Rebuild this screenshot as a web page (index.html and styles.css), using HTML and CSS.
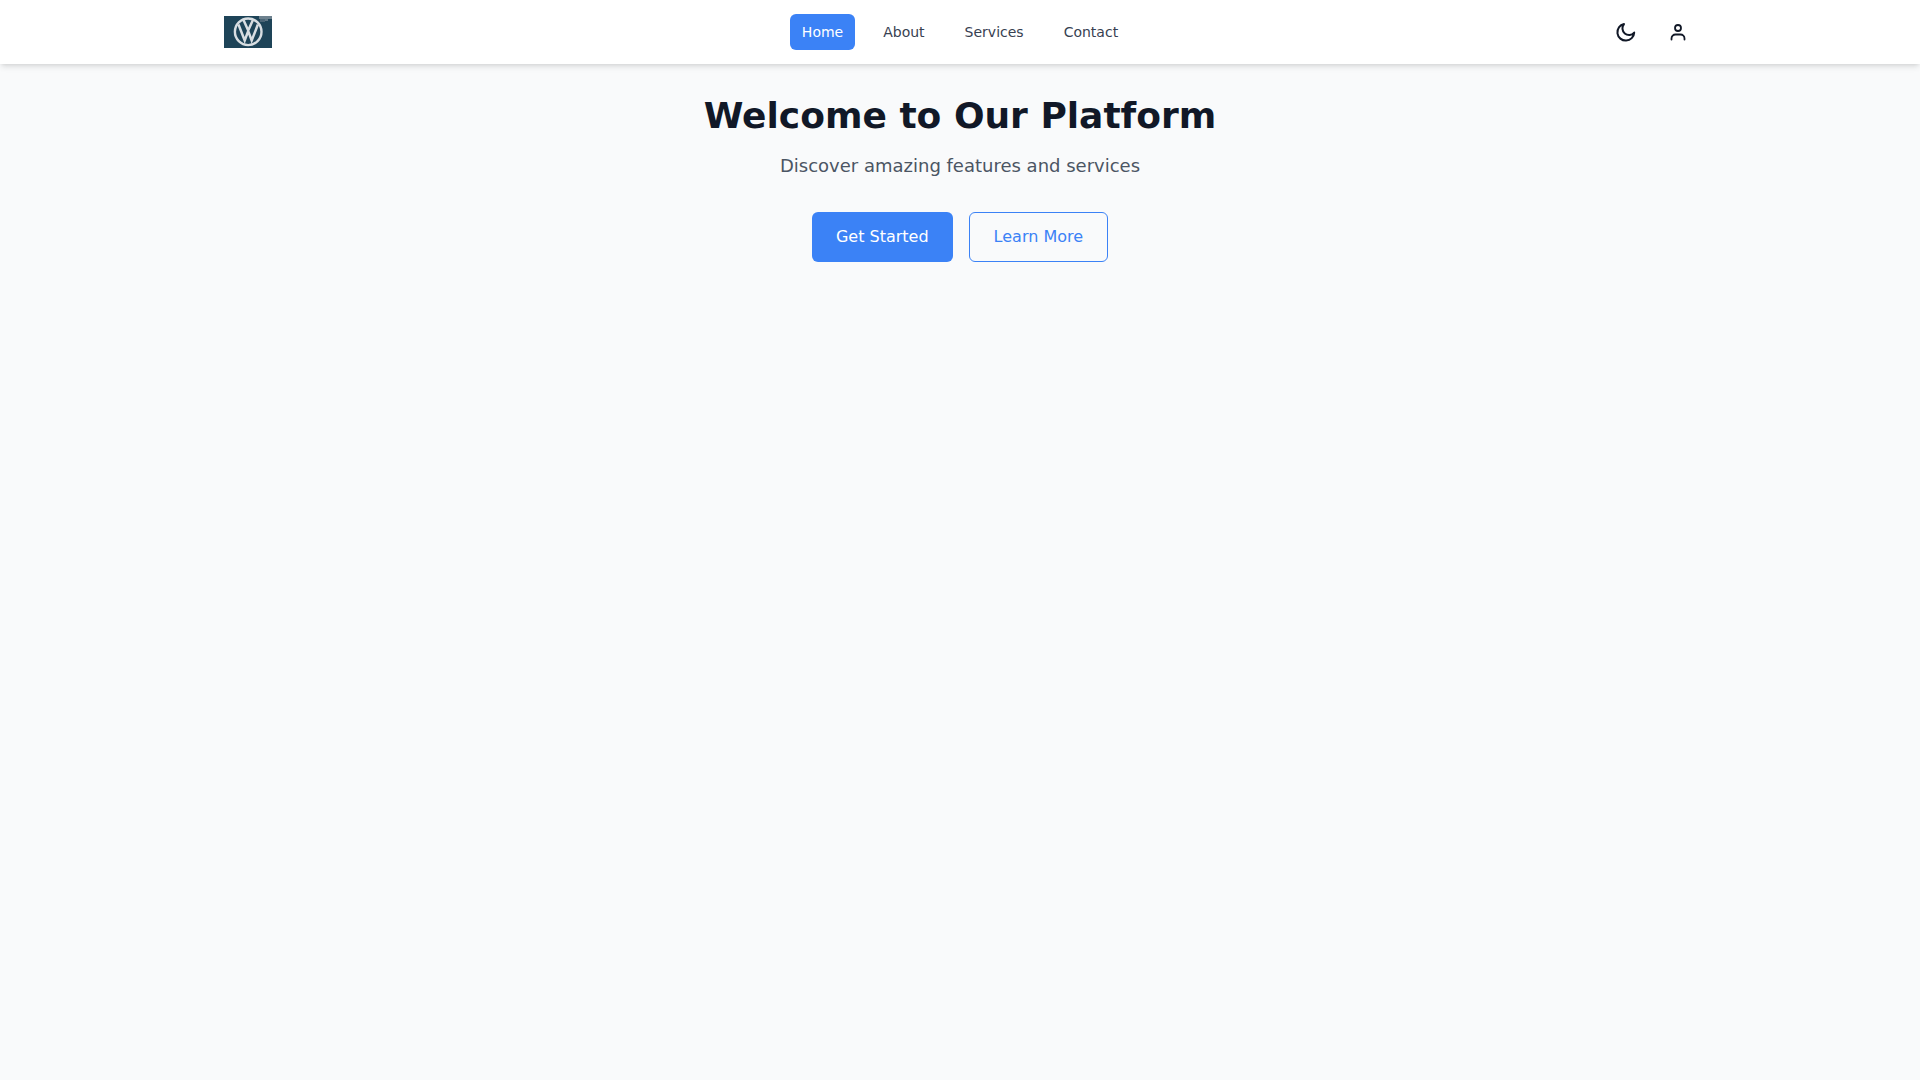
FILE: index.html
```html
<!DOCTYPE html>
<html lang="en">
<head>
    <meta charset="UTF-8">
    <meta name="viewport" content="width=device-width, initial-scale=1.0">
    <title>Welcome to Our Platform</title>
    <link rel="stylesheet" href="styles.css">
</head>
<body>
    <nav class="navbar">
        <div class="navbar-inner">
            <a class="logo" href="#">
                <svg width="48" height="32" viewBox="0 0 48 32">
                    <rect width="48" height="32" fill="#1e4458"/>
                    <rect x="35" y="0" width="13" height="3" fill="#6d818e"/>
                    <rect x="36" y="3" width="5" height="3" fill="#4a6576"/>
                    <rect x="41" y="3" width="3" height="2" fill="#5f7685"/>
                    <circle cx="24.2" cy="15.8" r="13.3" fill="none" stroke="#d8dee2" stroke-width="2.4"/>
                    <path d="M14.5 8.5 L20.7 24.5 L24.2 15 L27.7 24.5 L33.9 8.5 M19.5 4 L24.2 14.5 L28.9 4" fill="none" stroke="#d8dee2" stroke-width="2.5"/>
                </svg>
            </a>
            <div class="nav-links">
                <a class="nav-link active" href="#">Home</a>
                <a class="nav-link" href="#">About</a>
                <a class="nav-link" href="#">Services</a>
                <a class="nav-link" href="#">Contact</a>
            </div>
            <div class="nav-actions">
                <button class="icon-btn" aria-label="Toggle theme">
                    <svg width="24" height="24" viewBox="0 0 24 24" fill="none" stroke="#111827" stroke-width="2" stroke-linecap="round" stroke-linejoin="round">
                        <path d="M10 4A8.4 8.4 0 1 0 20.2 12.6 6.6 6.6 0 0 1 10 4z"/>
                    </svg>
                </button>
                <button class="icon-btn" aria-label="Account">
                    <svg width="24" height="24" viewBox="0 0 24 24" fill="none" stroke="#111827" stroke-width="1.8" stroke-linecap="round" stroke-linejoin="round">
                        <circle cx="12" cy="8" r="3"/>
                        <path d="M5.5 19.5v-1a4 4 0 0 1 4-4h5a4 4 0 0 1 4 4v1"/>
                    </svg>
                </button>
            </div>
        </div>
    </nav>

    <main class="hero">
        <h1>Welcome to Our Platform</h1>
        <p>Discover amazing features and services</p>
        <div class="hero-buttons">
            <a class="btn btn-primary" href="#">Get Started</a>
            <a class="btn btn-outline" href="#">Learn More</a>
        </div>
    </main>
</body>
</html>
```

FILE: styles.css
```css
body {
    font-family: "DejaVu Sans", sans-serif;
    margin: 0;
    background-color: #f9fafb;
    color: #111827;
}

a {
    text-decoration: none;
}

.navbar {
    background-color: #fff;
    box-shadow: 0 4px 6px -1px rgba(0, 0, 0, 0.1), 0 2px 4px -2px rgba(0, 0, 0, 0.1);
}

.navbar-inner {
    max-width: 1472px;
    height: 64px;
    margin: 0 auto;
    display: grid;
    grid-template-columns: 1fr auto 1fr;
    align-items: center;
}

.logo {
    display: flex;
}

.nav-links {
    display: flex;
    gap: 16px;
}

.nav-link {
    padding: 8px 12px;
    border-radius: 6px;
    font-size: 14px;
    line-height: 20px;
    color: #374151;
}

.nav-link.active {
    background-color: #3b82f6;
    color: #fff;
}

.nav-actions {
    display: flex;
    justify-content: flex-end;
    gap: 16px;
}

.icon-btn {
    display: flex;
    padding: 6px;
    border: none;
    background: none;
    cursor: pointer;
}

.hero {
    padding-top: 32px;
    text-align: center;
}

.hero h1 {
    margin: 0 0 16px;
    font-size: 36px;
    line-height: 40px;
    font-weight: 700;
}

.hero p {
    margin: 0 0 32px;
    font-size: 18px;
    line-height: 28px;
    color: #4b5563;
}

.hero-buttons {
    display: flex;
    justify-content: center;
    gap: 16px;
}

.btn {
    display: flex;
    align-items: center;
    padding: 12px 24px;
    border-radius: 6px;
    font-size: 16px;
    line-height: 24px;
}

.btn-primary {
    background-color: #3b82f6;
    color: #fff;
}

.btn-outline {
    border: 1px solid #3b82f6;
    color: #3b82f6;
}
```
